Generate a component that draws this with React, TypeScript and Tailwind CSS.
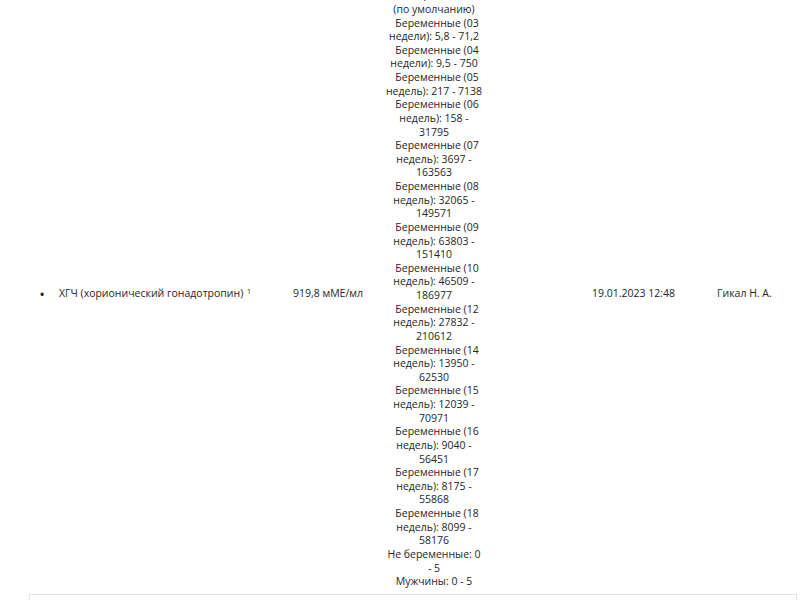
const referenceLines = [
  'Женщины: 0 - 5',
  '(по умолчанию)',
  'Беременные (03',
  'недели): 5,8 - 71,2',
  'Беременные (04',
  'недели): 9,5 - 750',
  'Беременные (05',
  'недель): 217 - 7138',
  'Беременные (06',
  'недель): 158 -',
  '31795',
  'Беременные (07',
  'недель): 3697 -',
  '163563',
  'Беременные (08',
  'недель): 32065 -',
  '149571',
  'Беременные (09',
  'недель): 63803 -',
  '151410',
  'Беременные (10',
  'недель): 46509 -',
  '186977',
  'Беременные (12',
  'недель): 27832 -',
  '210612',
  'Беременные (14',
  'недель): 13950 -',
  '62530',
  'Беременные (15',
  'недель): 12039 -',
  '70971',
  'Беременные (16',
  'недель): 9040 -',
  '56451',
  'Беременные (17',
  'недель): 8175 -',
  '55868',
  'Беременные (18',
  'недель): 8099 -',
  '58176',
  'Не беременные: 0',
  '- 5',
  'Мужчины: 0 - 5'
]

export default function App() {
  return (
    <div
      className="w-[808px] h-[600px] overflow-hidden bg-white text-[10.5px] leading-[13.62px] text-[#262626]"
      style={{ fontFamily: '"Open Sans", "Noto Sans", sans-serif' }}
    >
      {/* строка результата */}
      <div className="flex items-center ml-[29px] mr-[11px] -mt-[10.7px]">
        <div className="w-[26px] mt-[10px] text-center text-[15px] leading-[13px]">•</div>
        <div className="w-[230px] mt-[10px] pl-[4px]">
          ХГЧ (хорионический гонадотропин) <sup className="text-[7px] ml-[1px]">1</sup>
        </div>
        <div className="w-[91px] mt-[10px] pl-[8px]">919,8 мМЕ/мл</div>
        <div className="w-[116px] text-center">
          {referenceLines.map((line, index) => (
            <div key={index} className={line.startsWith('Беременные') ? 'pl-[6px]' : ''}>
              {line}
            </div>
          ))}
        </div>
        <div className="w-[100px]"></div>
        <div className="w-[125px] mt-[10px]">19.01.2023 12:48</div>
        <div className="flex-1 mt-[10px]">Гикал Н. А.</div>
      </div>

      {/* следующий блок */}
      <div className="ml-[29px] mr-[11px] mt-[5.5px] h-[40px] border border-[#e2e2e2]"></div>
    </div>
  )
}
